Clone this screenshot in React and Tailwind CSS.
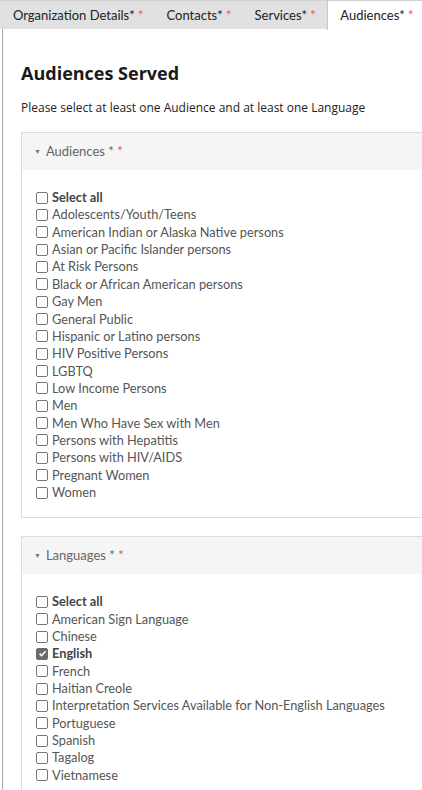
import React, { useState } from 'react';

const tabs = ['Organization Details', 'Contacts', 'Services', 'Audiences'];

const audiences = [
  'Adolescents/Youth/Teens',
  'American Indian or Alaska Native persons',
  'Asian or Pacific Islander persons',
  'At Risk Persons',
  'Black or African American persons',
  'Gay Men',
  'General Public',
  'Hispanic or Latino persons',
  'HIV Positive Persons',
  'LGBTQ',
  'Low Income Persons',
  'Men',
  'Men Who Have Sex with Men',
  'Persons with Hepatitis',
  'Persons with HIV/AIDS',
  'Pregnant Women',
  'Women',
];

const languages = [
  'American Sign Language',
  'Chinese',
  'English',
  'French',
  'Haitian Creole',
  'Interpretation Services Available for Non-English Languages',
  'Portuguese',
  'Spanish',
  'Tagalog',
  'Vietnamese',
];

// --- casilla dibujada a mano, como la del navegador ---
const Box = ({ checked }) => (
  <span
    className={`inline-flex items-center justify-center w-[12px] h-[12px] rounded-[2px] border shrink-0 mr-[4px] ${
      checked ? 'bg-[#6b6b6b] border-[#6b6b6b]' : 'bg-white border-[#767676]'
    }`}
  >
    {checked && (
      <svg width="9" height="9" viewBox="0 0 10 10">
        <path d="M1.8 5.2 L4 7.4 L8.3 2.4" fill="none" stroke="white" strokeWidth="1.8" />
      </svg>
    )}
  </span>
);

const Row = ({ label, checked, bold, onToggle }) => (
  <div className="flex items-center h-[17.35px] cursor-default" onClick={onToggle}>
    <Box checked={checked} />
    <span className={`${bold || checked ? 'font-bold text-[#444]' : 'text-[#555]'}`}>{label}</span>
  </div>
);

const Section = ({ title, items, initial = [] }) => {
  const [sel, setSel] = useState(initial);
  const allOn = sel.length === items.length;
  const toggle = (it) => setSel(sel.includes(it) ? sel.filter((s) => s !== it) : [...sel, it]);

  return (
    <div className="border border-[#dcdcdc] border-r-0 mr-[-2px]">
      <div className="h-[37px] bg-[#f5f5f5] flex items-center pl-[12px] text-[#666] text-[13px] font-['Lato',sans-serif]">
        <span className="text-[7px] mr-[5px] text-[#777]">▼</span>
        <span>
          {title} * <span className="text-[#e05a5a]">*</span>
        </span>
      </div>
      <div className="pl-[14px] pt-[19px] pb-[16px] text-[12.75px] font-['Lato',sans-serif]">
        <Row label="Select all" bold checked={allOn} onToggle={() => setSel(allOn ? [] : [...items])} />
        {items.map((it) => (
          <Row key={it} label={it} checked={sel.includes(it)} onToggle={() => toggle(it)} />
        ))}
      </div>
    </div>
  );
};

export default function App() {
  const [active, setActive] = useState('Audiences');

  return (
    <div className="w-[422px] h-[790px] overflow-hidden bg-white font-['Open_Sans',sans-serif]">
      {/* barra de pestañas */}
      <div className="flex h-[29px] bg-[#e1e1e1] border-t border-[#d0d0d0] text-[13px] font-['Lato',sans-serif]">
        {tabs.map((t) => (
          <div
            key={t}
            onClick={() => setActive(t)}
            className={`leading-[28px] whitespace-nowrap text-[#222] ${
              t === active ? 'bg-white border-x border-[#c8c8c8] h-[29px] px-[12px]' : 'px-[11.5px]'
            } ${t === tabs[0] ? 'ml-[1.5px]' : ''}`}
          >
            {t}* <span className="text-[#e05a5a]">*</span>
          </div>
        ))}
      </div>

      <div className="ml-[2px] border-l border-[#a8a8a8] h-full pl-[18px] pt-[32px]">
        <h1 className="text-[18px] font-bold text-[#1a1a1a] leading-[24px]">Audiences Served</h1>
        <p className="mt-[14px] text-[12px] text-[#222] leading-[18px]">
          Please select at least one Audience and at least one Language
        </p>

        <div className="mt-[15px]">
          <Section title="Audiences" items={audiences} />
        </div>
        <div className="mt-[18px]">
          <Section title="Languages" items={languages} initial={['English']} />
        </div>
      </div>
    </div>
  );
}
